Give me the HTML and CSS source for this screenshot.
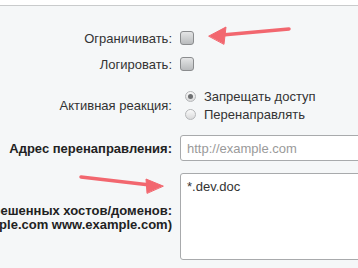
FILE: index.html
```html
<!DOCTYPE html>
<html>
<head>
<title>Настройки</title>
<link rel="stylesheet" href="styles.css">
</head>
<body>
  <div class="topbar"></div>
  <div class="form">
    <div class="row row-check">
      <div class="label">Ограничивать:</div>
      <div class="field"><span class="checkbox"></span></div>
    </div>
    <div class="row row-check">
      <div class="label">Логировать:</div>
      <div class="field"><span class="checkbox"></span></div>
    </div>
    <div class="row row-radio">
      <div class="label">Активная реакция:</div>
      <div class="field radios">
        <label class="radio-line"><span class="radio checked"></span>Запрещать доступ</label>
        <label class="radio-line"><span class="radio"></span>Перенаправлять</label>
      </div>
    </div>
    <div class="row row-input">
      <div class="label bold">Адрес перенаправления:</div>
      <div class="field"><input type="text" class="text-input" placeholder="http://example.com"></div>
    </div>
    <div class="row row-area">
      <div class="label bold multi">
        <span>Список разрешенных хостов/доменов:</span>
        <span>(например: example.com www.example.com)</span>
      </div>
      <div class="field"><textarea class="text-area">*.dev.doc</textarea></div>
    </div>
  </div>

  <svg class="arrows" width="358" height="268" viewBox="0 0 358 268">
    <g fill="#f2676f" stroke="#f2676f" stroke-linecap="round" stroke-linejoin="round">
      <line x1="289" y1="29" x2="222" y2="35" stroke-width="3.5"/>
      <polygon points="209,36 226,27 224,44" stroke-width="1"/>
      <line x1="81" y1="177" x2="150" y2="185" stroke-width="3.5"/>
      <polygon points="163,186 146,179 147,193" stroke-width="1"/>
    </g>
  </svg>
</body>
</html>
```

FILE: styles.css
```css
body{
    margin: 0;
    padding: 0;
    background: #f5f7f8;
    font-family: "Liberation Sans", Arial, sans-serif;
    font-size: 13px;
    color: #333;
    overflow: hidden;
    position: relative;
}
.topbar{
    height: 5px;
    background: #fff;
    border-bottom: 1px solid #c9cbcc;
}
.form{
    padding-top: 19px;
}
.row{
    display: grid;
    grid-template-columns: 172px 1fr;
    column-gap: 8px;
    align-items: center;
}
.row-check{
    height: 26px;
}
.row-radio{
    padding: 10px 0;
}
.row-input{
    height: 30px;
}
.row-area{
    padding-top: 10px;
}
.label{
    display: flex;
    justify-content: flex-end;
    white-space: nowrap;
    text-align: right;
}
.label.bold{
    font-weight: bold;
    color: #222;
}
.label.multi{
    flex-direction: column;
    align-items: flex-end;
    line-height: 14px;
    padding-top: 2px;
}
.field{
    display: flex;
    align-items: center;
}
.checkbox{
    display: block;
    width: 12px;
    height: 12px;
    border: 1px solid #8a8c8e;
    border-radius: 3px;
    background: linear-gradient(#e4e5e6, #b9bbbd);
}
.radios{
    flex-direction: column;
    align-items: flex-start;
}
.radio-line{
    display: flex;
    align-items: center;
    height: 18px;
    padding-left: 5px;
}
.radio{
    width: 9px;
    height: 9px;
    border: 1px solid #b5b7b9;
    border-radius: 50%;
    background: linear-gradient(#fafafa, #d9dadb);
    margin-right: 8px;
    position: relative;
}
.radio.checked::after{
    content: "";
    position: absolute;
    left: 2px;
    top: 2px;
    width: 5px;
    height: 5px;
    border-radius: 50%;
    background: #6d6f71;
}
.text-input{
    width: 220px;
    height: 24px;
    box-sizing: border-box;
    height: 26px;
    border: 1px solid #a8aaac;
    border-radius: 3px;
    background: #fff;
    padding: 0 6px;
    font-family: "Liberation Sans", Arial, sans-serif;
    font-size: 13px;
    color: #333;
    outline: 0;
}
.text-input::placeholder{
    color: #9a9a9a;
}
.text-area{
    width: 220px;
    height: 87px;
    box-sizing: border-box;
    border: 1px solid #a8aaac;
    border-radius: 3px;
    background: #fff;
    padding: 5px 6px;
    font-family: "Liberation Sans", Arial, sans-serif;
    font-size: 13px;
    color: #333;
    resize: none;
    outline: 0;
    margin: 0;
}
.arrows{
    position: absolute;
    left: 0;
    top: 0;
    pointer-events: none;
}
```
